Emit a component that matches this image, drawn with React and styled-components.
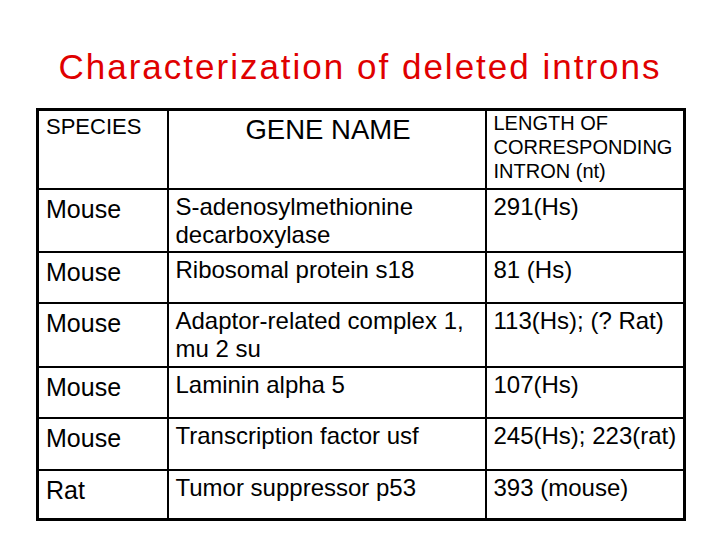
import React from 'react';
import styled, { createGlobalStyle } from 'styled-components';

const GlobalStyle = createGlobalStyle`
  html, body {
    margin: 0;
    padding: 0;
    background: #fff;
  }
  body {
    font-family: "Liberation Sans", Arial, sans-serif;
    color: #000;
  }
`;

const Slide = styled.div`
  width: 720px;
  height: 540px;
  box-sizing: border-box;
  padding: 44px 0 0 36px;
  background: #fff;
`;

const Title = styled.h1`
  margin: 0 0 18px -36px;
  width: 720px;
  text-align: center;
  font-size: 35px;
  letter-spacing: 2px;
  line-height: 46px;
  font-weight: normal;
  color: #e00000;
`;

const Table = styled.table`
  width: 647px;
  border-collapse: collapse;
  border: 3px solid #000;
  table-layout: fixed;
`;

const Col = styled.col`
  width: ${p => p.$w}px;
`;

const Row = styled.tr`
  height: ${p => p.$h}px;
`;

const Cell = styled.td`
  border: 2px solid #000;
  vertical-align: top;
  white-space: nowrap;
  padding: ${p => (p.$pad != null ? p.$pad : 3)}px 4px 0 7px;
  font-size: ${p => p.$size || 24}px;
  line-height: ${p => p.$lh || 28}px;
  text-align: ${p => (p.$center ? 'center' : 'left')};
`;

const rows = [
  { h: 63, sp: 'Mouse', gene: ['S-adenosylmethionine', 'decarboxylase'], len: '291(Hs)' },
  { h: 51, sp: 'Mouse', gene: ['Ribosomal protein s18'], len: '81 (Hs)' },
  { h: 64, sp: 'Mouse', gene: ['Adaptor-related complex 1,', 'mu 2 su'], len: '113(Hs); (? Rat)' },
  { h: 51, sp: 'Mouse', gene: ['Laminin alpha 5'], len: '107(Hs)' },
  { h: 52, sp: 'Mouse', gene: ['Transcription factor usf'], len: '245(Hs); 223(rat)' },
  { h: 50, sp: 'Rat', gene: ['Tumor suppressor p53'], len: '393 (mouse)' },
];

export default function App() {
  return (
    <>
      <GlobalStyle />
      <Slide>
        <Title>Characterization of deleted introns</Title>
        <Table>
          <colgroup>
            <Col $w={130} />
            <Col $w={318} />
            <Col $w={199} />
          </colgroup>
          <tbody>
            <Row $h={79}>
              <Cell $size={22} $lh={26} $pad={3}>SPECIES</Cell>
              <Cell $size={27.5} $lh={30} $pad={4} $center>GENE NAME</Cell>
              <Cell $size={20} $lh={24} $pad={0}>
                LENGTH OF<br />CORRESPONDING<br />INTRON (nt)
              </Cell>
            </Row>
            {rows.map((r, i) => (
              <Row key={i} $h={r.h}>
                <Cell $size={25} $pad={5}>{r.sp}</Cell>
                <Cell $pad={3}>
                  {r.gene.map((g, j) => (
                    <React.Fragment key={j}>
                      {j > 0 && <br />}
                      {g}
                    </React.Fragment>
                  ))}
                </Cell>
                <Cell $pad={3}>{r.len}</Cell>
              </Row>
            ))}
          </tbody>
        </Table>
      </Slide>
    </>
  );
}
